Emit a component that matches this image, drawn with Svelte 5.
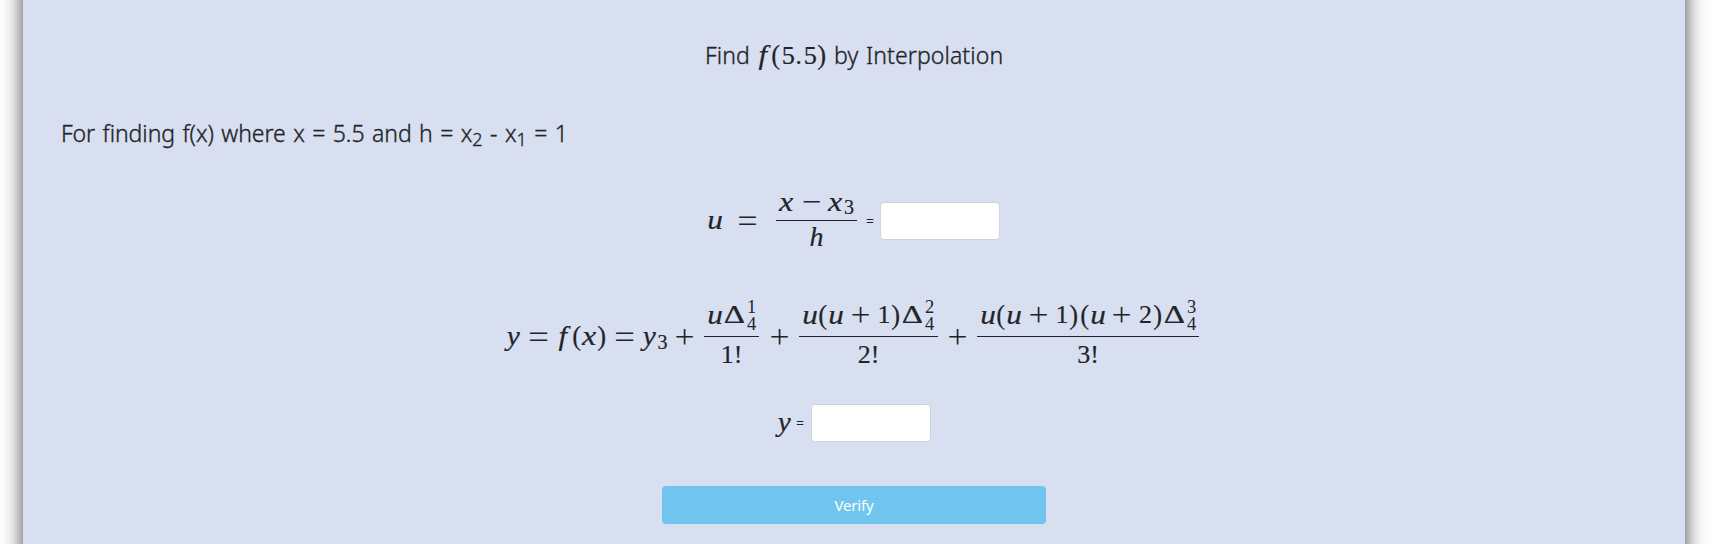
<script>
  // Each glyph: [text, space before, width, kind, horizontal stretch]
  const U = (gap) => ['u', gap, 14, 'var', 1.12];
  const plus = (gap) => ['+', gap, 18, 'op', 1.06];
  const open = (gap) => ['(', gap, 6, 'fence', 0.95];
  const close = (gap) => [')', gap, 6, 'fence', 0.95];
  const delta = (gap) => ['Δ', gap, 21, 'num', 1.27];

  const heading = [['f', 7, 13, 'var', 1.1], open(4), ['5', 4, 11, 'num', 1.05], ['.', 2, 5, 'num', 1], ['5', 3, 12, 'num', 1.05], close(3)];
  const uLeft = [U(0), ['=', 17, 18, 'op', 1.25]];
  const uTop = [['x', 3, 14, 'var', 1.15], ['−', 10, 17, 'op', 1.05], ['x', 8, 14, 'var', 1.15], ['3', 2, 10, 'sub', 1]];
  const lead = [
    ['y', 0, 13, 'var', 1.05], ['=', 9, 19, 'op', 1.28], ['f', 8, 14, 'var', 1.1], open(4),
    ['x', 3, 13, 'var', 1.15], close(3), ['=', 10, 19, 'op', 1.28], ['y', 9, 13, 'var', 1.05],
    ['3', 2, 9, 'sub', 1], plus(9)
  ];
  const terms = [
    { width: 55, gap: 10, top: [U(4), delta(2)], power: '1', bottom: '1!' },
    { width: 139, gap: 10, top: [U(4), open(3), U(3), plus(9), ['1', 9, 10, 'num', 1], close(4), delta(3)], power: '2', bottom: '2!' },
    {
      width: 222, gap: 10,
      top: [U(4), open(3), U(3), plus(9), ['1', 9, 10, 'num', 1], close(4), open(5), U(3), plus(8), ['2', 9, 11, 'num', 1], close(4), delta(3)],
      power: '3', bottom: '3!'
    }
  ];
  let u = $state('');
  let y = $state('');
</script>

{#snippet glyphs(list)}
  {#each list as [text, gap, width, kind, stretch]}
    <span class="cell" style="width:{width}px;margin-left:{gap}px"><span class="glyph {kind}" style="--sx:{stretch}">{text}</span></span>
  {/each}
{/snippet}

<div class="viewport">
<main class="panel">
  <h1 class="title"><span class="find">Find</span>{@render glyphs(heading)}<span class="tail">by Interpolation</span></h1>
  <p class="intro">For finding f(x) where x = 5.5 and h = x<sub>2</sub> - x<sub>1</sub> = 1</p>

  <div class="row u-row">
    <div class="run">{@render glyphs(uLeft)}</div>
    <div class="fraction small">
      <div class="top">{@render glyphs(uTop)}</div>
      <div class="bar"></div>
      <div class="bottom"><span class="glyph var">h</span></div>
    </div>
    <span class="equals">=</span>
    <input aria-label="u" bind:value={u} />
  </div>

  <div class="row series">
    <div class="run">{@render glyphs(lead)}</div>
    {#each terms as term, i}
      {#if i > 0}
        <div class="run">{@render glyphs([plus(i === 1 ? 12 : 11)])}</div>
      {/if}
      <div class="fraction" style="width:{term.width}px;margin-left:{term.gap}px">
        <div class="top">
          {@render glyphs(term.top)}
          <span class="scripts"><span>{term.power}</span><span>4</span></span>
        </div>
        <div class="bar"></div>
        <div class="bottom"><span class="glyph num">{term.bottom}</span></div>
      </div>
    {/each}
  </div>

  <div class="row y-row">
    <div class="run">{@render glyphs([['y', 0, 13, 'var', 1.05]])}</div>
    <span class="equals">=</span>
    <input aria-label="y" bind:value={y} />
  </div>

  <button type="button">Verify</button>
</main>
</div>

<style>
  :global(body) {
    background: #fff;
  }
  .viewport {
    height: 544px;
    overflow: hidden;
  }
  .panel {
    box-sizing: border-box;
    width: 1662px;
    height: 624px;
    margin: -40px 0 0 23px;
    padding-top: 76px;
    background: #d8dff0;
    box-shadow: 0 0 20px #444;
    color: #212529;
    font-family: 'Noto Sans', 'Open Sans', sans-serif;
    font-size: 24px;
  }
  .title {
    display: flex;
    align-items: center;
    height: 40px;
    margin: 0 0 0 682px;
    font-size: 23px;
    font-weight: 350;
    line-height: 37px;
    white-space: nowrap;
    -webkit-text-stroke: 0.35px #212529;
  }
  .find,
  .tail {
    margin-bottom: 2px;
  }
  .find {
    width: 44px;
    letter-spacing: 0.1px;
  }
  .tail {
    margin-left: 9px;
    letter-spacing: 0.1px;
    word-spacing: 1.6px;
  }
  .intro {
    height: 40px;
    margin: 38px 0 0 38px;
    font-size: 23px;
    font-weight: 350;
    line-height: 38px;
    letter-spacing: -0.05px;
    word-spacing: 1.55px;
    white-space: nowrap;
    -webkit-text-stroke: 0.35px #212529;
  }
  .intro sub {
    font-size: 18px;
    line-height: 0;
    vertical-align: -4px;
  }
  .row {
    display: flex;
    align-items: center;
    height: 90px;
  }
  .run,
  .top,
  .bottom {
    display: flex;
    align-items: center;
  }
  .u-row {
    margin: 22px 0 0 685px;
  }
  .series {
    margin: 26px 0 0 484px;
  }
  .y-row {
    height: 38px;
    margin: 22px 0 0 755px;
  }
  .cell {
    display: flex;
    flex: none;
    justify-content: center;
    height: 34px;
  }
  .glyph {
    display: block;
    flex: none;
    font-family: 'Liberation Serif', serif;
    font-size: 27px;
    font-weight: 400;
    line-height: 34px;
    -webkit-text-stroke: 0.2px #212529;
    transform: scaleX(var(--sx, 1));
  }
  .var {
    font-size: 28px;
    font-style: italic;
    line-height: 33px;
  }
  .run .var,
  .title .var,
  .bottom .var,
  .title .fence,
  .run .fence {
    line-height: 31px;
  }
  .fence {
    font-size: 28px;
    line-height: 33px;
  }
  .num {
    font-size: 26px;
  }
  .title .num {
    font-size: 25px;
    line-height: 33px;
  }
  .bottom .num {
    line-height: 35px;
  }
  .sub {
    font-size: 20px;
    line-height: 44px;
  }
  .op {
    font-family: Inter, sans-serif;
    font-size: 36px;
    font-weight: 200;
    line-height: 29px;
    -webkit-text-stroke: 0;
  }
  .fraction {
    flex: none;
    margin-bottom: 1px;
  }
  .small {
    width: 81px;
    margin-left: 19px;
  }
  .top {
    box-sizing: border-box;
    height: 44px;
    padding-top: 5px;
    padding-bottom: 3px;
  }
  .bottom {
    justify-content: center;
    align-items: flex-start;
    height: 44px;
  }
  .bar {
    height: 1px;
    background: #212529;
  }
  .small .top {
    padding-top: 8px;
    padding-bottom: 1px;
  }
  .scripts {
    display: flex;
    flex-direction: column;
    width: 10px;
    margin: 2px 0 0 2px;
    font-family: 'Liberation Serif', serif;
    font-size: 18.5px;
    line-height: 17px;
  }
  .equals {
    width: 8px;
    margin-left: 9px;
    font-size: 14px;
    line-height: 20px;
  }
  .y-row .equals {
    margin-left: 5px;
  }
  input {
    box-sizing: border-box;
    width: 120px;
    height: 38px;
    margin: 0 0 0 6px;
    padding: 6px 12px;
    border: 1px solid #ced4da;
    border-radius: 4px;
    background: #fff;
    font: inherit;
    font-size: 16px;
  }
  .y-row input {
    margin-left: 7px;
  }
  button {
    display: block;
    width: 384px;
    height: 38px;
    margin: 44px 0 0 639px;
    padding: 0;
    border: 0;
    border-radius: 4px;
    background: #70c5ee;
    color: #fff;
    font-family: 'Noto Sans', 'Open Sans', sans-serif;
    font-size: 15px;
    line-height: 38px;
    letter-spacing: -0.2px;
  }
</style>
